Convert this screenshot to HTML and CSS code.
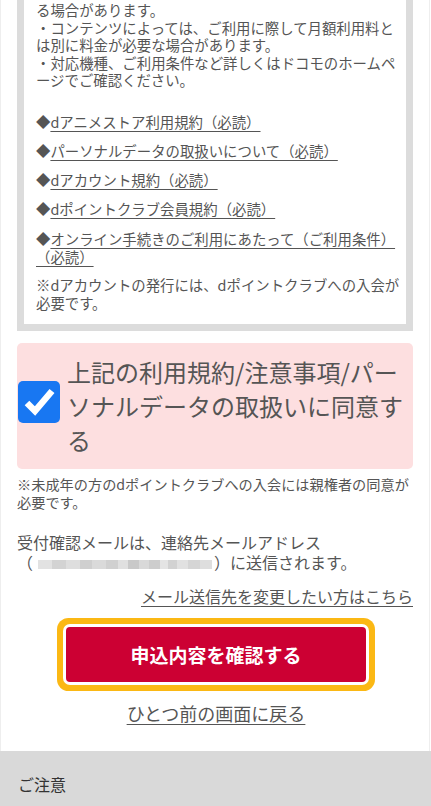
FILE: index.html
```html
<!DOCTYPE html>
<html lang="ja">
<head>
<meta charset="utf-8">
<title>申込内容の確認</title>
<link rel="stylesheet" href="styles.css">
</head>
<body>
<div class="page">
  <div class="terms">
    <p class="terms-text">る場合があります。<br>・コンテンツによっては、ご利用に際して月額利用料とは別に料金が必要な場合があります。<br>・対応機種、ご利用条件など詳しくはドコモのホームページでご確認ください。</p>
    <ul class="links">
      <li>◆<a href="#">dアニメストア利用規約（必読）</a></li>
      <li>◆<a href="#">パーソナルデータの取扱いについて（必読）</a></li>
      <li>◆<a href="#">dアカウント規約（必読）</a></li>
      <li>◆<a href="#">dポイントクラブ会員規約（必読）</a></li>
      <li class="wide">◆<a href="#">オンライン手続きのご利用にあたって（ご利用条件）（必読）</a></li>
    </ul>
    <p class="terms-note">※dアカウントの発行には、dポイントクラブへの入会が必要です。</p>
  </div>

  <label class="agree">
    <span class="checkbox">
      <svg viewBox="0 0 42 42" width="42" height="42" aria-hidden="true"><path d="M9 22 L17 30 L34 10" fill="none" stroke="#fff" stroke-width="6.5" stroke-linejoin="miter"/></svg>
    </span>
    <span class="agree-text">上記の利用規約/注意事項/パーソナルデータの取扱いに同意する</span>
  </label>

  <p class="minor">※未成年の方のdポイントクラブへの入会には親権者の同意が必要です。</p>
  <p class="mail">受付確認メールは、連絡先メールアドレス<span class="nowrap">（<span class="blur"></span>）</span>に送信されます。</p>
  <p class="change"><a href="#">メール送信先を変更したい方はこちら</a></p>

  <div class="actions">
    <button class="submit" type="button">申込内容を確認する</button>
    <a class="back" href="#">ひとつ前の画面に戻る</a>
  </div>
</div>
<footer class="footer">ご注意</footer>
</body>
</html>
```
FILE: styles.css
```css
html, body {
  margin: 0;
  padding: 0;
  background: #fff;
}
body {
  font-family: "Noto Sans CJK JP", "Noto Sans", sans-serif;
  color: #555;
}
.page {
  width: 430px;
  box-sizing: border-box;
  border-left: 1px solid #eee;
  border-right: 1px solid #eee;
  padding: 0 16px 26px;
}
.terms {
  border: 7px solid #dcdcdc;
  border-top: 0;
  padding: 0 4px 12px 12px;
  font-size: 14.4px;
  line-height: 17.6px;
  background: #fff;
}
.terms-text {
  margin: 0;
  padding-top: 1px;
}
.links {
  list-style: none;
  margin: 24.5px 0 0;
  padding: 0;
}
.links li {
  margin-top: 11.1px;
}
.links li:first-child {
  margin-top: 0;
}
.links li.wide {
  margin-top: 13px;
}
.links a, .change a, .back {
  color: #555;
  text-decoration: underline;
  text-decoration-thickness: 1px;
  text-underline-offset: 3px;
}
.terms-note {
  margin: 11px 0 0;
}
.agree {
  margin-top: 12px;
  background: #fddfe0;
  border-radius: 5px;
  display: flex;
  align-items: center;
  gap: 7px;
  padding: 12px 8px 12px 1px;
}
.checkbox {
  flex: none;
  width: 42px;
  height: 42px;
  border-radius: 5px;
  background: #1877f2;
  display: block;
  margin-top: -8px;
}
.checkbox svg {
  display: block;
}
.agree-text {
  font-size: 24px;
  line-height: 34px;
  color: #555;
}
.minor {
  margin: 6px -4px 0 0;
  font-size: 14.2px;
  line-height: 18.5px;
}
.mail {
  margin: 20px 0 0;
  font-size: 16px;
  line-height: 20px;
}
.nowrap {
  white-space: nowrap;
}
.blur {
  display: inline-block;
  width: 174px;
  height: 9px;
  margin: 0 2px 0 5px;
  vertical-align: 0px;
  background:
    linear-gradient(90deg,
      #e2e2e2 0 8%, #d3d3d3 8% 16%, #dedede 16% 24%, #cfcfcf 24% 31%,
      #dadada 31% 39%, #d0d0d0 39% 46%, #e0e0e0 46% 52%, #c9c9c9 52% 58%,
      #d9d9d9 58% 64%, #cdcdcd 64% 70%, #e4e4e4 70% 75%, #d2d2d2 75% 80%,
      #e1e1e1 80% 86%, #d5d5d5 86% 93%, #dedede 93% 100%);
}
.change {
  margin: 14px 0 0;
  text-align: right;
  font-size: 16px;
  line-height: 20px;
}
.actions {
  display: flex;
  flex-direction: column;
  align-items: center;
  padding-left: 2px;
}
.submit {
  margin-top: 21px;
  width: 300px;
  height: 55px;
  border: 0;
  border-radius: 4px;
  background: #cc0033;
  color: #fff;
  font-family: "Noto Sans CJK JP", "Noto Sans", sans-serif;
  font-size: 19px;
  font-weight: bold;
  box-shadow: 0 0 0 3px #fff, 0 0 0 9px #fbb814;
  cursor: pointer;
}
.back {
  margin-top: 19px;
  font-size: 18px;
  line-height: 24px;
}
.footer {
  background: #d9d9d9;
  color: #333;
  font-size: 16px;
  line-height: 20px;
  padding: 23px 18px 40px;
}
```
